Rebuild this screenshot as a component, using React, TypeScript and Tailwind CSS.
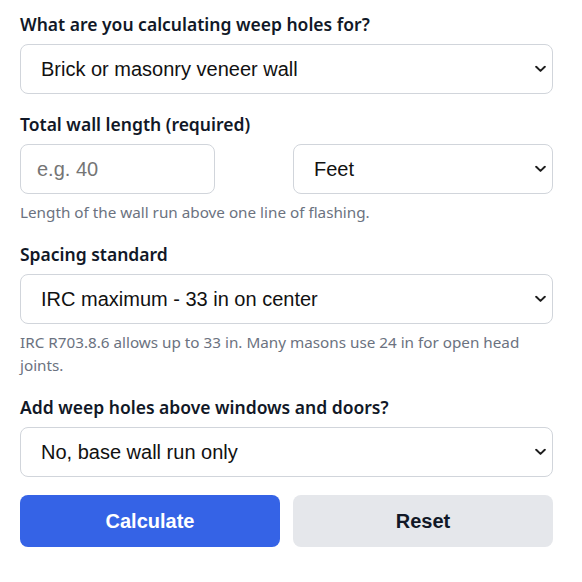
import { useState } from 'react';

const label = "block text-[17.5px] font-semibold text-[#111827] leading-6 mb-2 font-['Noto_Sans',sans-serif]";
const help = "mt-[7px] text-[15.25px] leading-[23px] text-[#6b7280] font-['Noto_Sans',sans-serif]";
const field =
    "h-[50px] w-full rounded-lg border border-[#d1d5db] bg-white text-[20px] text-[#111] font-['Liberation_Sans',Arial,sans-serif] focus:outline-none";

function Chevron() {
    return (
        <svg
            className="pointer-events-none absolute right-[7px] top-1/2 -translate-y-1/2"
            width="11"
            height="7"
            viewBox="0 0 11 7"
            fill="none"
        >
            <path d="M1.2 1.2 5.5 5.4 9.8 1.2" stroke="#1f1f1f" strokeWidth="2" strokeLinecap="round" strokeLinejoin="round" />
        </svg>
    );
}

function Select({ value, options, onChange }: { value: string; options: string[]; onChange: (v: string) => void }) {
    return (
        <div className="relative w-full">
            <select
                value={value}
                onChange={(e) => onChange(e.target.value)}
                className={`${field} appearance-none pl-5 pr-8`}
            >
                {options.map((o) => (
                    <option key={o}>{o}</option>
                ))}
            </select>
            <Chevron />
        </div>
    );
}

export default function App() {
    const [type, setType] = useState('Brick or masonry veneer wall');
    const [length, setLength] = useState('');
    const [unit, setUnit] = useState('Feet');
    const [spacing, setSpacing] = useState('IRC maximum - 33 in on center');
    const [openings, setOpenings] = useState('No, base wall run only');

    const reset = () => {
        setType('Brick or masonry veneer wall');
        setLength('');
        setUnit('Feet');
        setSpacing('IRC maximum - 33 in on center');
        setOpenings('No, base wall run only');
    };

    return (
        <div className="min-h-screen bg-white">
            <form
                className="w-[533px] ml-5 pt-3 flex flex-col gap-[18px]"
                onSubmit={(e) => e.preventDefault()}
            >
                <div>
                    <label className={label}>What are you calculating weep holes for?</label>
                    <Select
                        value={type}
                        onChange={setType}
                        options={['Brick or masonry veneer wall', 'Stone veneer wall', 'Stucco wall']}
                    />
                </div>

                <div>
                    <label className={label}>Total wall length (required)</label>
                    <div className="flex justify-between">
                        <input
                            type="number"
                            value={length}
                            onChange={(e) => setLength(e.target.value)}
                            placeholder="e.g. 40"
                            className={`${field} !w-[195px] px-4 placeholder:text-[#757575]`}
                        />
                        <div className="w-[260px]">
                            <Select value={unit} onChange={setUnit} options={['Feet', 'Meters']} />
                        </div>
                    </div>
                    <p className={help}>Length of the wall run above one line of flashing.</p>
                </div>

                <div>
                    <label className={label}>Spacing standard</label>
                    <Select
                        value={spacing}
                        onChange={setSpacing}
                        options={['IRC maximum - 33 in on center', 'Common practice - 24 in on center', 'Tight - 16 in on center']}
                    />
                    <p className={help}>
                        IRC R703.8.6 allows up to 33 in. Many masons use 24 in for open head joints.
                    </p>
                </div>

                <div>
                    <label className={label}>Add weep holes above windows and doors?</label>
                    <Select
                        value={openings}
                        onChange={setOpenings}
                        options={['No, base wall run only', 'Yes, add openings']}
                    />
                </div>

                <div className="flex gap-[13px] font-['Liberation_Sans',Arial,sans-serif]">
                    <button
                        type="submit"
                        className="h-[52px] flex-1 rounded-lg bg-[#3563e6] text-[20px] font-bold text-white"
                    >
                        Calculate
                    </button>
                    <button
                        type="button"
                        onClick={reset}
                        className="h-[52px] flex-1 rounded-lg bg-[#e5e7eb] text-[20px] font-bold text-[#111827]"
                    >
                        Reset
                    </button>
                </div>
            </form>
        </div>
    );
}
